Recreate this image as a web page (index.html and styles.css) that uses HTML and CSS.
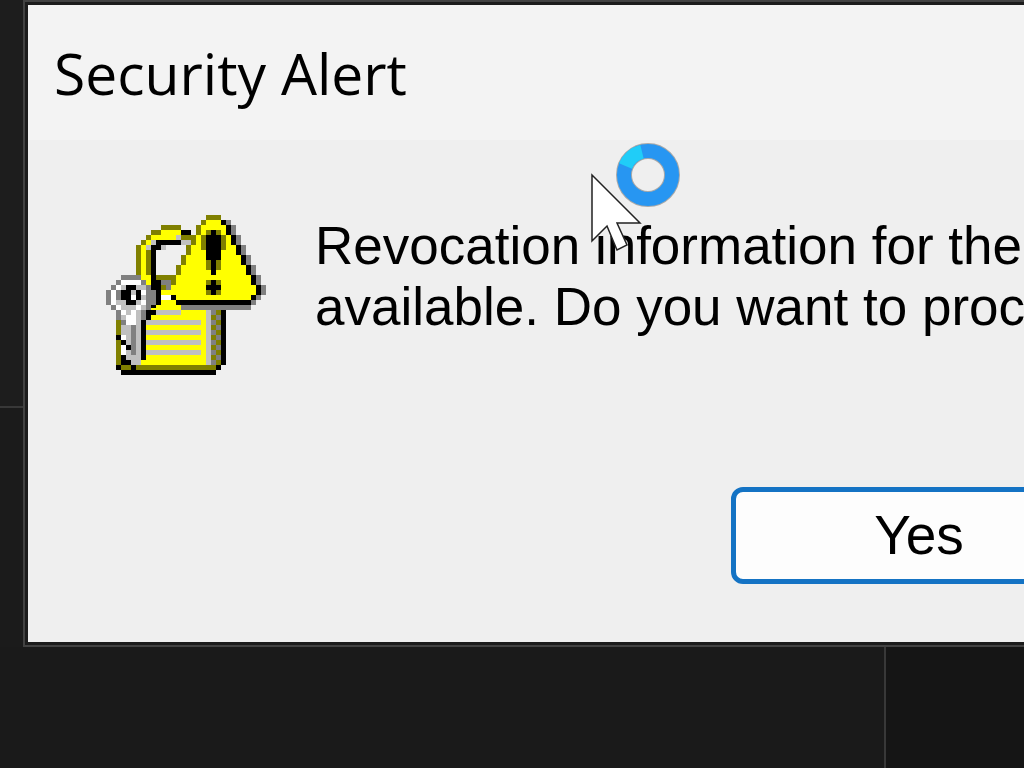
FILE: index.html
```html
<!DOCTYPE html>
<html lang="en">
<head>
<meta charset="utf-8">
<title>Security Alert</title>
<link rel="stylesheet" href="styles.css">
</head>
<body>
<div class="desktop">
  <div class="upper">
    <div class="side"><div class="side-top"></div></div>
    <main class="dialog" role="alertdialog" aria-labelledby="title" aria-describedby="message">
      <div class="window">
        <header class="titlebar"><h1 id="title">Security Alert</h1></header>
        <div class="content">
          <svg class="lock" viewBox="0 0 32 32" shape-rendering="crispEdges" fill="none" aria-hidden="true">
            <g transform="translate(0 .5)">
              <!-- shackle -->
              <path stroke="#808000" d="M11 2h4M9 3h2M8 4h1M7 5h1M6 6h1M6 7h1M6 8h1M6 9h1M6 10h1M6 11h1M8 7h1M8 8h1M8 9h1M8 10h1M8 11h1M10 12h4M10 13h4M10 14h4M15 4h3"/>
              <path stroke="#ff0" d="M11 3h4M9 4h5M8 5h2M7 6h1M7 7h1M7 8h1M7 9h1M7 10h1M7 11h1M7 12h2M8 13h1"/>
              <path stroke="#c0c0c0" d="M14 4h1M9 5h1M15 5h2M8 6h1M11 6h1"/>
              <path stroke="#000" d="M15 3h2M10 5h5M9 6h2M9 7h1M9 8h1M9 9h1M9 10h1M9 11h1M9 12h1M9 13h2M9 14h2M10 15h1M10 16h1M10 17h1M9 18h1"/>
              <path stroke="#808080" d="M11 13h2M12 14h1"/>
              <!-- body -->
              <path stroke="#ff0" stroke-width="12" d="M3 24h17"/>
              <path stroke="#ff0" d="M11 15h4M11 16h4M11 17h4M10 18h5"/>
              <path stroke="#fff" d="M11 16h2"/>
              <path stroke="#c0c0c0" d="M10 19h5M8 21h11M8 23h11M8 25h11M8 27h11"/>
              <path stroke="#c0c0c0" stroke-width="11" d="M20 24h1"/>
              <path stroke="#808000" stroke-width="11" d="M21 24h2"/>
              <path stroke="#808080" d="M21 19h1M22 20h1M21 21h1M22 22h1M21 23h1M22 24h1M21 25h1M22 26h1M21 27h1M22 28h1M21 29h1"/>
              <path stroke="#000" stroke-width="11" d="M23 24h1"/>
              <path stroke="#808000" stroke-width="9" d="M2 25h1"/>
              <path stroke="#808000" d="M3 30h19"/>
              <path stroke="#000" d="M22 30h1M3 31h19M2 30h1"/>
              <!-- warning sign -->
              <path stroke="#ff0" d="M20 1h3M19 2h5M19 3h5M18 4h7M18 5h7M17 6h9M17 7h9M16 8h11M16 9h11M15 10h13M15 11h13M14 12h15M14 13h15M13 14h17M13 15h17M14 16h15"/>
              <path stroke="#808000" d="M20 0h3M19 1h1M18 2h1M18 3h1M16 4h2M17 5h1M16 6h1M16 7h1M15 8h1M15 9h1M14 10h1M14 11h1M13 12h1M13 13h1M20 3h1M22 3h1M19 4h1M23 4h1M19 5h1M23 5h1M19 6h1M23 6h1M20 9h1M22 9h1M20 10h1M22 10h1M20 13h1M22 13h1M20 15h1M22 15h1"/>
              <path stroke="#000" d="M23 1h1M24 2h1M24 3h1M25 4h1M25 5h1M26 6h1M26 7h1M27 8h1M27 9h1M28 10h1M28 11h1M29 12h1M29 13h1M30 14h1M30 15h1M29 16h1M13 16h1M14 17h15M21 3h1M20 4h3M20 5h3M20 6h3M20 7h3M20 8h3M21 9h1M21 10h1M21 11h1M21 13h1M20 14h3M21 15h1"/>
              <path stroke="#808080" d="M24 1h1M25 2h1M25 3h1M26 4h1M26 5h1M27 6h1M27 7h1M28 8h1M28 9h1M29 10h1M29 11h1M30 12h1M30 13h1M31 14h1M31 15h1M30 16h1M29 17h1M15 18h14"/>
              <!-- key -->
              <path stroke="#c0c0c0" d="M2 14h6M1 15h8M1 16h8M1 17h8M1 18h7M2 19h6M3 20h5M3 21h4M3 22h4M3 23h4M3 24h4M4 25h3M4 26h3M4 27h3M4 28h3M5 29h2"/>
              <path stroke="#fff" d="M3 13h4M2 14h1M1 15h1M1 16h1M1 17h1M2 18h1M7 15h1M7 17h1M6 18h1M3 19h1M5 19h1M4 20h2M4 21h2M3 24h1M3 26h1M3 27h1"/>
              <path stroke="#808080" d="M3 12h4M2 13h1M7 13h1M1 14h1M8 14h1M0 15h1M2 15h1M8 15h2M0 16h1M2 16h1M8 16h2M0 17h1M8 17h2M1 18h1M8 18h1M2 19h1M7 19h1M2 20h1M7 20h1M3 21h1M5 22h1M5 23h1M5 24h1M5 25h1M5 26h1M5 27h1"/>
              <path stroke="#000" d="M4 14h2M3 15h2M6 15h1M3 16h2M6 16h1M4 17h2M8 19h2M8 20h1M7 21h1M7 22h1M7 23h1M7 24h1M7 25h1M7 26h1M7 27h1M7 28h1M2 24h1M3 25h1M4 26h1M3 28h1M3 29h2M5 30h1"/>
              <path stroke="#fff" d="M5 16h1"/>
            </g>
          </svg>
          <p class="message" id="message">Revocation information for the<br>available. Do you want to proceed?</p>
        </div>
        <footer class="actions"><button class="yes" type="button" autofocus>Yes</button></footer>
      </div>
    </main>
  </div>
  <div class="lower"><div class="lower-left"></div></div>
  <svg class="pointer" viewBox="0 0 92 112" aria-hidden="true">
    <circle cx="58" cy="35" r="24" fill="none" stroke="#a9a9a9" stroke-width="16"/>
    <circle cx="58" cy="35" r="24" fill="none" stroke="#2796f2" stroke-width="14"/>
    <path d="M35.500 26A24 24 0 0 1 52 11.800" fill="none" stroke="#20cdf8" stroke-width="14"/>
    <path d="M2 35V101L17 86L27 110L37 105L27 83H50Z" fill="#fff" stroke="#222" stroke-width="1.500"/>
  </svg>
</div>
</body>
</html>
```
FILE: styles.css
```css
* { box-sizing: border-box; }
body { margin: 0; background: #1a1a1a; color: #000; }
.desktop {
  position: relative;
  display: flex;
  flex-direction: column;
  height: 100vh;
  overflow: hidden;
}
.upper { display: flex; }
.side { width: 23px; flex: none; background: #1b1b1b; }
.side-top {
  height: 63%;
  background: #1d1d1d;
  border-bottom: 2px solid #383838;
}
.dialog {
  flex: 1;
  min-width: 0;
  border: 2px solid #424242;
  border-right: 0;
  padding: 3px 0 3px 3px;
  background: #1c1c1c;
}
.window { background: #efefef; overflow: hidden; }
.titlebar { background: #f3f3f3; padding: 28px 26px 27px; }
h1 {
  margin: 0;
  font: 400 57px/80px "Open Sans", "Noto Sans", sans-serif;
}
.content {
  display: flex;
  gap: 49px;
  padding: 75px 0 0 78px;
}
.lock { width: 160px; height: 160px; flex: none; }
.message {
  margin: 0;
  font: 400 53px/61px "Liberation Sans", Arial, sans-serif;
  white-space: nowrap;
}
.actions { padding: 112px 0 58px 703px; }
.yes {
  width: 376px;
  height: 97px;
  padding: 0;
  border: 5px solid #1473c4;
  border-radius: 12px;
  outline: 0;
  background: #fdfdfd;
  color: #000;
  font: 400 55px/61px "Liberation Sans", Arial, sans-serif;
}
.lower { flex: 1; display: flex; background: #151515; }
.lower-left {
  width: 886px;
  background: #1a1a1a;
  border-right: 2px solid #383838;
}
.pointer {
  position: absolute;
  left: 590px;
  top: 140px;
  width: 92px;
  height: 112px;
}
```
